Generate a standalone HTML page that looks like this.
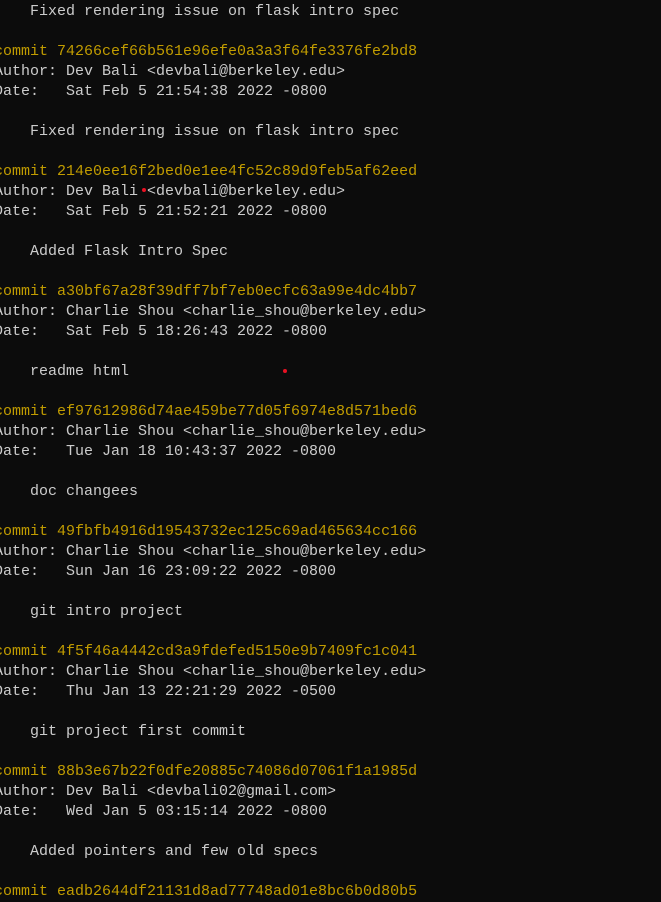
<!DOCTYPE html>
<html><head><style>
body{margin:0;background:#0c0c0c;width:661px;height:898px;overflow:hidden;position:relative}
pre{margin:0;position:absolute;left:-6px;top:2px;font-family:"Liberation Mono","DejaVu Sans Mono",monospace;font-size:15px;line-height:20px;color:#cccccc}
.y{color:#c19c00}
.d{position:absolute;width:4px;height:4px;border-radius:2px;background:#e81123}
</style></head><body>
<pre>    Fixed rendering issue on flask intro spec

<span class="y">commit 74266cef66b561e96efe0a3a3f64fe3376fe2bd8</span>
Author: Dev Bali &lt;devbali@berkeley.edu&gt;
Date:   Sat Feb 5 21:54:38 2022 -0800

    Fixed rendering issue on flask intro spec

<span class="y">commit 214e0ee16f2bed0e1ee4fc52c89d9feb5af62eed</span>
Author: Dev Bali &lt;devbali@berkeley.edu&gt;
Date:   Sat Feb 5 21:52:21 2022 -0800

    Added Flask Intro Spec

<span class="y">commit a30bf67a28f39dff7bf7eb0ecfc63a99e4dc4bb7</span>
Author: Charlie Shou &lt;charlie_shou@berkeley.edu&gt;
Date:   Sat Feb 5 18:26:43 2022 -0800

    readme html

<span class="y">commit ef97612986d74ae459be77d05f6974e8d571bed6</span>
Author: Charlie Shou &lt;charlie_shou@berkeley.edu&gt;
Date:   Tue Jan 18 10:43:37 2022 -0800

    doc changees

<span class="y">commit 49fbfb4916d19543732ec125c69ad465634cc166</span>
Author: Charlie Shou &lt;charlie_shou@berkeley.edu&gt;
Date:   Sun Jan 16 23:09:22 2022 -0800

    git intro project

<span class="y">commit 4f5f46a4442cd3a9fdefed5150e9b7409fc1c041</span>
Author: Charlie Shou &lt;charlie_shou@berkeley.edu&gt;
Date:   Thu Jan 13 22:21:29 2022 -0500

    git project first commit

<span class="y">commit 88b3e67b22f0dfe20885c74086d07061f1a1985d</span>
Author: Dev Bali &lt;devbali02@gmail.com&gt;
Date:   Wed Jan 5 03:15:14 2022 -0800

    Added pointers and few old specs

<span class="y">commit eadb2644df21131d8ad77748ad01e8bc6b0d80b5</span></pre>
<div class="d" style="left:142px;top:188px"></div>
<div class="d" style="left:283px;top:369px"></div>
</body></html>
